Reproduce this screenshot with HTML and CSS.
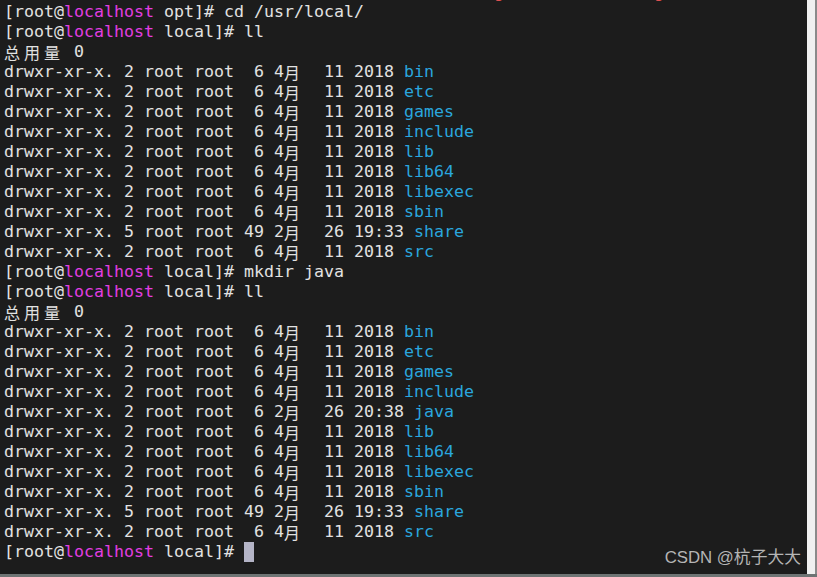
FILE: index.html
```html
<!DOCTYPE html>
<html lang="zh-CN">
<head>
    <meta charset="UTF-8">
    <title>Terminal</title>
    <link rel="stylesheet" href="styles.css">
</head>
<body>
    <div class="window">
        <div class="main">
            <div class="terminal">
                <div class="line cut"><span class="err">                                                 g               g</span></div>
                <div class="line">[root@<span class="host">localhost</span> opt]# cd /usr/local/</div>
                <div class="line">[root@<span class="host">localhost</span> local]# ll</div>
                <div class="line"><span class="cjk">总</span><span class="cjk">用</span><span class="cjk">量</span> 0</div>
                <div class="line">drwxr-xr-x. 2 root root  6 4<span class="cjk">月</span>  11 2018 <span class="dir">bin</span></div>
                <div class="line">drwxr-xr-x. 2 root root  6 4<span class="cjk">月</span>  11 2018 <span class="dir">etc</span></div>
                <div class="line">drwxr-xr-x. 2 root root  6 4<span class="cjk">月</span>  11 2018 <span class="dir">games</span></div>
                <div class="line">drwxr-xr-x. 2 root root  6 4<span class="cjk">月</span>  11 2018 <span class="dir">include</span></div>
                <div class="line">drwxr-xr-x. 2 root root  6 4<span class="cjk">月</span>  11 2018 <span class="dir">lib</span></div>
                <div class="line">drwxr-xr-x. 2 root root  6 4<span class="cjk">月</span>  11 2018 <span class="dir">lib64</span></div>
                <div class="line">drwxr-xr-x. 2 root root  6 4<span class="cjk">月</span>  11 2018 <span class="dir">libexec</span></div>
                <div class="line">drwxr-xr-x. 2 root root  6 4<span class="cjk">月</span>  11 2018 <span class="dir">sbin</span></div>
                <div class="line">drwxr-xr-x. 5 root root 49 2<span class="cjk">月</span>  26 19:33 <span class="dir">share</span></div>
                <div class="line">drwxr-xr-x. 2 root root  6 4<span class="cjk">月</span>  11 2018 <span class="dir">src</span></div>
                <div class="line">[root@<span class="host">localhost</span> local]# mkdir java</div>
                <div class="line">[root@<span class="host">localhost</span> local]# ll</div>
                <div class="line"><span class="cjk">总</span><span class="cjk">用</span><span class="cjk">量</span> 0</div>
                <div class="line">drwxr-xr-x. 2 root root  6 4<span class="cjk">月</span>  11 2018 <span class="dir">bin</span></div>
                <div class="line">drwxr-xr-x. 2 root root  6 4<span class="cjk">月</span>  11 2018 <span class="dir">etc</span></div>
                <div class="line">drwxr-xr-x. 2 root root  6 4<span class="cjk">月</span>  11 2018 <span class="dir">games</span></div>
                <div class="line">drwxr-xr-x. 2 root root  6 4<span class="cjk">月</span>  11 2018 <span class="dir">include</span></div>
                <div class="line">drwxr-xr-x. 2 root root  6 2<span class="cjk">月</span>  26 20:38 <span class="dir">java</span></div>
                <div class="line">drwxr-xr-x. 2 root root  6 4<span class="cjk">月</span>  11 2018 <span class="dir">lib</span></div>
                <div class="line">drwxr-xr-x. 2 root root  6 4<span class="cjk">月</span>  11 2018 <span class="dir">lib64</span></div>
                <div class="line">drwxr-xr-x. 2 root root  6 4<span class="cjk">月</span>  11 2018 <span class="dir">libexec</span></div>
                <div class="line">drwxr-xr-x. 2 root root  6 4<span class="cjk">月</span>  11 2018 <span class="dir">sbin</span></div>
                <div class="line">drwxr-xr-x. 5 root root 49 2<span class="cjk">月</span>  26 19:33 <span class="dir">share</span></div>
                <div class="line">drwxr-xr-x. 2 root root  6 4<span class="cjk">月</span>  11 2018 <span class="dir">src</span></div>
                <div class="line">[root@<span class="host">localhost</span> local]# <span class="cursor"> </span></div>
                <div class="watermark">CSDN @杭子大大</div>
            </div>
            <div class="scrollbar"><div class="thumb"></div></div>
        </div>
        <div class="bottom-bar"></div>
    </div>
</body>
</html>
```

FILE: styles.css
```css
body {
    margin: 0;
    padding: 0;
    background-color: #1c1c1c;
}
.window {
    width: 817px;
    height: 577px;
    display: flex;
    flex-direction: column;
    overflow: hidden;
}
.main {
    flex: 1;
    display: flex;
    min-height: 0;
}
.terminal {
    position: relative;
    flex: 1;
    background-color: #1c1c1c;
    color: #e2e2e2;
    font-family: "DejaVu Sans Mono", "Noto Sans CJK SC", monospace;
    font-size: 16.61px;
    padding: 2px 0 0 4px;
    overflow: hidden;
}
.line {
    height: 20px;
    line-height: 20px;
    white-space: pre;
}
.line.cut {
    margin-top: -19px;
    margin-bottom: -1px;
}
.err {
    color: #e05050;
}
.host {
    color: #e23ee2;
}
.dir {
    color: #2aa6de;
}
.cjk {
    display: inline-block;
    width: 20px;
    height: 20px;
    line-height: 20px;
    vertical-align: top;
    font-family: "Noto Sans CJK SC", sans-serif;
    font-size: 16px;
}
.cursor {
    display: inline-block;
    width: 10px;
    height: 20px;
    vertical-align: top;
    background-color: #b4b4c6;
}
.watermark {
    position: absolute;
    right: 6px;
    bottom: 6px;
    font-family: "Liberation Sans", "Noto Sans CJK SC", sans-serif;
    font-size: 16.8px;
    color: #b5b5b5;
}
.scrollbar {
    width: 10px;
    background-color: #f0f0f0;
    display: flex;
    justify-content: flex-end;
}
.thumb {
    width: 2px;
    height: 100%;
    background-color: #8a8a8a;
}
.bottom-bar {
    height: 3px;
    background-color: #6e7474;
}
```
